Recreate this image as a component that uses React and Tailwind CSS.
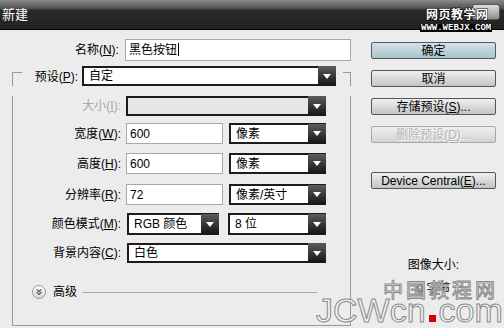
import { ChevronsDown } from 'lucide-react'

const Caret = () => (
  <div className="-my-[2px] -mr-[2px] ml-auto flex h-[20px] w-[18px] shrink-0 items-center justify-center bg-[linear-gradient(#5c5c5c,#141414)]">
    <svg width="8" height="5" viewBox="0 0 8 5">
      <polygon points="0,0 8,0 4,5" fill="#fff" />
    </svg>
  </div>
)

const Drop = ({ className = '', text, disabled = false }) => (
  <div
    className={`flex h-[20px] items-center border-2 border-[#1c1c1c] ${disabled ? 'bg-[#e6e6e6]' : 'bg-white'} ${className}`}
  >
    <span className="pl-[5px] text-[12px] leading-none text-black">{text}</span>
    <Caret />
  </div>
)

const Field = ({ className = '', text }) => (
  <div className={`flex h-[21px] items-center border border-[#a9a9a9] bg-white pl-[3px] text-[12px] ${className}`}>
    {text}
  </div>
)

const Label = ({ children, disabled = false }) => (
  <div className={`w-[110px] pr-[2px] text-right text-[12px] ${disabled ? 'text-[#a6a6a6]' : 'text-black'}`}>
    {children}
  </div>
)

const Btn = ({ children, primary = false, disabled = false, className = '' }) => (
  <div
    className={`flex h-[17px] items-center justify-center rounded-[2px] border text-[12px] leading-none ${
      primary
        ? 'border-[#4f5b60] bg-[linear-gradient(#d3e3e8,#a9c3cb)] text-black'
        : disabled
          ? 'border-[#a8a8a8] bg-[linear-gradient(#eeeeee,#d4d4d4)] text-[#b4b4b4]'
          : 'border-[#555] bg-[linear-gradient(#f0f0f0,#c4c4c4)] text-black'
    } ${className}`}
  >
    {children}
  </div>
)

export default function App() {
  return (
    <div className="relative h-[328px] w-[504px] overflow-hidden bg-[#ececec] font-['Liberation_Sans','Noto_Sans_CJK_SC',sans-serif]">
      {/* title bar */}
      <div className="flex h-[30px] items-center border-b border-black bg-[linear-gradient(#8a8a8a_0%,#4e4e4e_30%,#2a2a2a_36%,#222_100%)]">
        <span className="pl-[2px] pt-[1px] text-[13px] text-white">新建</span>
        <div className="mr-[4px] ml-auto mb-[6px] h-[16px] w-[28px] rounded-[3px] border border-[#555] bg-[linear-gradient(#e0e0e0,#8c8c8c)]" />
      </div>

      <div className="flex">
        {/* left column */}
        <div className="w-[351px] pt-[9px]">
          <div className="flex items-center">
            <div className="w-[122px] pr-[2px] text-right text-[12px]">
              名称(<u>N</u>):
            </div>
            <Field className="ml-[4px] h-[22px] w-[228px]" text={<span>黑色按钮<span className="ml-px inline-block h-[13px] w-px translate-y-[2px] bg-black" /></span>} />
          </div>

          <div className="mt-[5px] ml-[12px] w-[339px]">
            <div className="flex h-[20px] items-start">
              <div className="mt-[6px] h-[14px] w-[10px] border-t border-l border-[#9a9a9a]" />
              <div className="w-[60px] pr-[4px] pt-[2px] text-right text-[12px]">
                预设(<u>P</u>):
              </div>
              <Drop className="w-[254px]" text="自定" />
              <div className="mt-[6px] ml-[7px] h-[14px] flex-1 border-t border-r border-[#9a9a9a]" />
            </div>

            <div className="h-[230px] border-r border-b border-l border-[#9a9a9a]">
              <div className="mt-[10px] flex items-center">
                <Label disabled>
                  大小(<u>I</u>):
                </Label>
                <Drop disabled className="ml-[3px] w-[200px]" text="" />
              </div>
              <div className="mt-[7px] flex items-center">
                <Label>
                  宽度(<u>W</u>):
                </Label>
                <Field className="ml-[3px] w-[97px]" text="600" />
                <Drop className="ml-[6px] h-[21px] w-[97px]" text="像素" />
              </div>
              <div className="mt-[9px] flex items-center">
                <Label>
                  高度(<u>H</u>):
                </Label>
                <Field className="ml-[3px] w-[97px]" text="600" />
                <Drop className="ml-[6px] h-[21px] w-[97px]" text="像素" />
              </div>
              <div className="mt-[10px] flex items-center">
                <Label>
                  分辨率(<u>R</u>):
                </Label>
                <Field className="ml-[3px] w-[97px]" text="72" />
                <Drop className="ml-[6px] h-[21px] w-[97px]" text="像素/英寸" />
              </div>
              <div className="mt-[8px] flex items-center">
                <Label>
                  颜色模式(<u>M</u>):
                </Label>
                <Drop className="ml-[4px] h-[22px] w-[92px]" text="RGB 颜色" />
                <Drop className="ml-[9px] h-[22px] w-[98px]" text="8 位" />
              </div>
              <div className="mt-[8px] flex items-center">
                <Label>
                  背景内容(<u>C</u>):
                </Label>
                <Drop className="ml-[4px] w-[199px]" text="白色" />
              </div>
              <div className="mt-[20px] flex items-center">
                <div className="ml-[19px] flex h-[14px] w-[14px] items-center justify-center rounded-full border border-[#9c9c9c] bg-[linear-gradient(#ffffff,#d6d6d6)]">
                  <ChevronsDown size={10} strokeWidth={2.5} className="text-[#333]" />
                </div>
                <span className="ml-[7px] text-[12px]">高级</span>
                <div className="ml-[5px] h-px w-[235px] bg-[#a8a8a8]" />
              </div>
            </div>
          </div>
        </div>

        {/* right column */}
        <div className="ml-[20px] w-[125px] pt-[12px]">
          <Btn primary>确定</Btn>
          <Btn className="mt-[11px]">取消</Btn>
          <Btn className="mt-[11px]">
            存储预设(<u>S</u>)...
          </Btn>
          <Btn disabled className="mt-[11px] [text-shadow:1px_1px_0_#fff]">
            删除预设(<u>D</u>)...
          </Btn>
          <Btn className="mt-[29px]">
            Device Central(<u>E</u>)...
          </Btn>
          <div className="mt-[69px] text-center text-[12px] leading-[14px]">图像大小:</div>
          <div className="mt-[10px] text-center text-[12px] leading-[14px]">0 字节</div>
        </div>
      </div>

      {/* watermarks */}
      <div className="absolute top-[6px] left-[426px] whitespace-nowrap font-['Noto_Sans_CJK_SC',sans-serif] text-[12px] font-bold leading-[16px] tracking-[0.5px] text-white [-webkit-text-stroke:1px_#000] [paint-order:stroke_fill]">
        网页教学网
      </div>
      <div className="absolute top-[24px] left-[420px] whitespace-nowrap bg-black px-px font-['Liberation_Mono',monospace] text-[9px] font-bold leading-[8px] text-white">
        WWW.WEBJX.COM
      </div>
      <div className="absolute top-[279px] left-[383px] whitespace-nowrap text-[20px] leading-[24px] tracking-[3px] text-[#f3f3f3] [-webkit-text-stroke:1px_#8c8c8c]">
        中国教程网
      </div>
      <div className="absolute top-[292px] left-[316px] flex items-end whitespace-nowrap text-[34px] leading-[36px] text-[#f1f1f1] [-webkit-text-stroke:1px_#8a8a8a]">
        <span>JCWcn</span>
        <span className="mx-[3px] mb-[6px] inline-block h-[7px] w-[7px] bg-[#d40000]" />
        <span>com</span>
      </div>
    </div>
  )
}
